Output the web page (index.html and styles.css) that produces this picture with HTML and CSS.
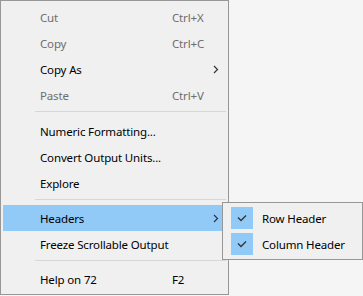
FILE: index.html
```html
<!DOCTYPE html>
<html lang="en">
<head>
  <meta charset="UTF-8" />
  <title>Context menu</title>
  <link rel="stylesheet" href="styles.css">
</head>
<body>
  <div class="menu">
    <div class="item disabled"><span class="label">Cut</span><span class="key">Ctrl+X</span></div>
    <div class="item disabled"><span class="label">Copy</span><span class="key">Ctrl+C</span></div>
    <div class="item">
      <span class="label">Copy As</span><span class="key"></span>
      <svg class="arrow" width="6" height="9" viewBox="0 0 6 9"><polyline points="1,1 4.5,4.5 1,8" /></svg>
    </div>
    <div class="item disabled"><span class="label">Paste</span><span class="key">Ctrl+V</span></div>
    <div class="sep first"></div>
    <div class="item"><span class="label">Numeric Formatting...</span></div>
    <div class="item"><span class="label">Convert Output Units...</span></div>
    <div class="item"><span class="label">Explore</span></div>
    <div class="sep"></div>
    <div class="item active">
      <span class="label">Headers</span><span class="key"></span>
      <svg class="arrow" width="6" height="9" viewBox="0 0 6 9"><polyline points="1,1 4.5,4.5 1,8" /></svg>
    </div>
    <div class="item"><span class="label">Freeze Scrollable Output</span></div>
    <div class="sep"></div>
    <div class="item"><span class="label">Help on 72</span><span class="key">F2</span></div>
  </div>

  <div class="submenu">
    <div class="subitem">
      <span class="check"><svg width="22" height="22" viewBox="0 0 22 22"><polyline points="7,10.5 10,13.5 15,8.5" /></svg></span>
      <span class="label">Row Header</span>
    </div>
    <div class="subitem">
      <span class="check"><svg width="22" height="22" viewBox="0 0 22 22"><polyline points="7,10.5 10,13.5 15,8.5" /></svg></span>
      <span class="label">Column Header</span>
    </div>
  </div>
</body>
</html>
```

FILE: styles.css
```css
body {
  margin: 0;
  background: #f5f5f5;
  font-family: 'Noto Sans', sans-serif;
  font-size: 11.5px;
  letter-spacing: -0.15px;
  color: #000;
}

.menu {
  width: 223px;
  padding: 3px 2px 2px 2px;
  background: #f0f0f0;
  border: 1px solid #979797;
}

.item {
  display: flex;
  align-items: center;
  height: 26px;
}

.item .label {
  width: 132px;
  padding-left: 37px;
  white-space: nowrap;
}

.item .key {
  width: 41px;
}

.item.disabled {
  color: #6d6d6d;
}

.item.active {
  background: #91c9f7;
}

.arrow polyline {
  fill: none;
  stroke: #333;
  stroke-width: 1.2;
}

.sep {
  height: 1px;
  margin: 3px 0 5px 32px;
  background: #d7d7d7;
}

.sep.first {
  margin-bottom: 6px;
}

.submenu {
  position: absolute;
  left: 222px;
  top: 202px;
  width: 139px;
  padding: 2px 0;
  background: #f0f0f0;
  border: 1px solid #979797;
}

.subitem {
  display: flex;
  align-items: center;
  height: 26px;
  padding-left: 8px;
}

.check {
  width: 22px;
  height: 22px;
  margin-right: 9px;
  background: #91c9f7;
}

.check polyline {
  fill: none;
  stroke: #333;
  stroke-width: 1.3;
}
```
